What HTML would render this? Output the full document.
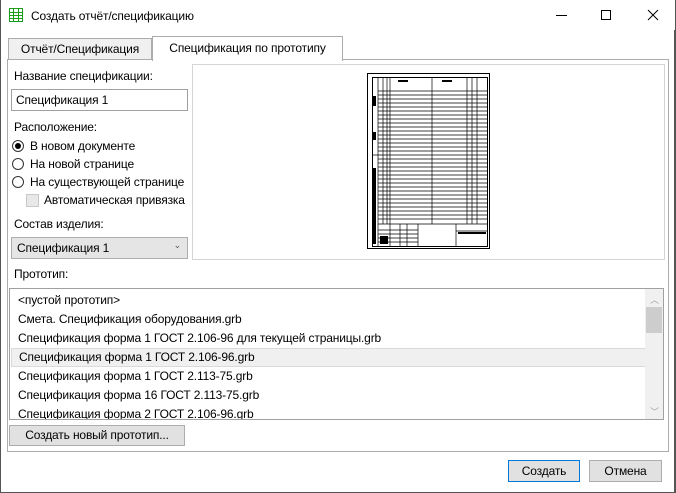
<!DOCTYPE html>
<html><head><meta charset="utf-8"><style>
*{box-sizing:border-box;margin:0;padding:0}
body{width:676px;height:493px;background:#fff;font-family:"Liberation Sans",sans-serif;font-size:12px;color:#000;position:relative;overflow:hidden;letter-spacing:-0.15px}
.a{position:absolute;white-space:nowrap}
.win{position:absolute;left:0;top:0;width:676px;height:493px;border:1px solid #555;border-top:none}
.pane{position:absolute;left:7px;top:59px;width:662px;height:393px;border:1px solid #acacac}
.tab{position:absolute;border:1px solid #acacac;border-bottom:none;text-align:center}
.inp{position:absolute;border:1px solid #a0a0a0;background:#fff;padding:3px 4px}
.btn{position:absolute;border:1px solid #adadad;background:#e1e1e1;text-align:center}
.radio{position:absolute;width:12px;height:12px;border:1px solid #333;border-radius:50%;background:#fff}
.list div{height:19px;line-height:19px;padding-left:8px}
</style></head><body>
<div class="win"></div>
<svg class="a" style="left:9px;top:8px" width="14" height="14"><rect x="0.5" y="0.5" width="13" height="13" fill="#fff" stroke="#1a9e1a"/><path d="M0 4.5H14M0 7.5H14M0 10.5H14M4.5 0V14M9.5 0V14" stroke="#1a9e1a"/></svg>
<div class="a" style="left:31px;top:9px">Создать отчёт/спецификацию</div>
<div class="a" style="left:556px;top:15px;width:11px;height:1px;background:#000"></div>
<div class="a" style="left:601px;top:10px;width:10px;height:10px;border:1px solid #000"></div>
<svg class="a" style="left:647px;top:9px" width="12" height="12"><path d="M1 1L11 11M11 1L1 11" stroke="#000"/></svg>
<div class="a" style="left:674px;top:30px;width:2px;height:463px;background:#555"></div>

<div class="pane"></div>
<div class="tab" style="left:8px;top:38px;width:144px;height:21px;background:#f0f0f0;line-height:20px">Отчёт/Спецификация</div>
<div class="tab" style="left:152px;top:36px;width:191px;height:25px;background:#fff;line-height:22px">Спецификация по прототипу</div>

<div class="a" style="left:14px;top:69px">Название спецификации:</div>
<div class="inp" style="left:11px;top:89px;width:177px;height:22px">Спецификация 1</div>
<div class="a" style="left:14px;top:120px">Расположение:</div>
<div class="radio" style="left:12px;top:140px"><div style="position:absolute;left:2px;top:2px;width:6px;height:6px;border-radius:50%;background:#000"></div></div>
<div class="a" style="left:30px;top:139px">В новом документе</div>
<div class="radio" style="left:12px;top:158px"></div>
<div class="a" style="left:30px;top:157px">На новой странице</div>
<div class="radio" style="left:12px;top:176px"></div>
<div class="a" style="left:30px;top:175px">На существующей странице</div>
<div class="a" style="left:26px;top:194px;width:13px;height:13px;border:1px solid #c8c8c8;background:#e8e8e8"></div>
<div class="a" style="left:44px;top:193px">Автоматическая привязка</div>
<div class="a" style="left:14px;top:217px">Состав изделия:</div>
<div class="btn" style="left:11px;top:237px;width:177px;height:22px;text-align:left;padding:3px 5px;background:#e5e5e5">Спецификация 1<span style="position:absolute;right:6px;top:2px;font-size:9px;color:#555">⌄</span></div>

<div class="a" style="left:192px;top:64px;width:473px;height:196px;border:1px solid #d4d4d4;background:#fff"></div>
<svg class="a" style="left:366px;top:72px" width="126" height="180" viewBox="366 72 126 180">
<rect x="367.5" y="73.5" width="122" height="175" fill="#fff" stroke="#000"/>
<rect x="372.5" y="77.5" width="115" height="169" fill="none" stroke="#000"/>
<g stroke="#000" stroke-width="0.7" fill="none">
<path d="M378 78V247M383 78V224M387 78V224M390 78V224M432 78V224M467 78V224M472 78V224M477 78V224"/>
<path d="M378 91H488M378 95H488M378 99H488M378 103H488M378 107H488M378 111H488M378 115H488M378 119H488M378 123H488M378 127H488M378 131H488M378 135H488M378 139H488M378 143H488M378 147H488M378 151H488M378 155H488M378 159H488M378 163H488M378 167H488M378 171H488M378 175H488M378 179H488M378 183H488M378 187H488M378 191H488M378 195H488M378 199H488M378 203H488M378 207H488M378 211H488M378 215H488M378 219H488"/>
<path d="M378 224H488M418 224V247M456 231H488M456 224V247M378 230H418M378 234H418M378 238H418M378 242H418M390 224V247M400 224V247M407 224V247M372 155H378"/>
</g>
<g fill="#000"><rect x="373" y="96" width="3" height="10"/><rect x="373" y="132" width="3" height="8"/><rect x="373" y="168" width="3" height="76"/><rect x="398" y="80" width="10" height="2"/><rect x="442" y="80" width="10" height="2"/><rect x="380" y="236" width="8" height="8"/><rect x="458" y="232" width="28" height="2"/></g>
</svg>

<div class="a" style="left:14px;top:267px">Прототип:</div>
<div class="a list" style="left:9px;top:288px;width:655px;height:132px;border:1px solid #a0a0a0;background:#fff;overflow:hidden;padding-top:2px">
<div>&lt;пустой прототип&gt;</div>
<div>Смета. Спецификация оборудования.grb</div>
<div>Спецификация форма 1 ГОСТ 2.106-96 для текущей страницы.grb</div>
<div style="background:#f0f0f0;border:1px solid #dadada;width:636px;margin-left:1px;padding-left:7px;line-height:17px">Спецификация форма 1 ГОСТ 2.106-96.grb</div>
<div>Спецификация форма 1 ГОСТ 2.113-75.grb</div>
<div>Спецификация форма 16 ГОСТ 2.113-75.grb</div>
<div>Спецификация форма 2 ГОСТ 2.106-96.grb</div>
</div>
<div class="a" style="left:645px;top:289px;width:18px;height:130px;background:#f0f0f0"></div>
<div class="a" style="left:646px;top:307px;width:16px;height:26px;background:#cdcdcd"></div>
<div class="a" style="left:650px;top:293px;font-size:9px;color:#a0a0a0">︿</div>
<div class="a" style="left:650px;top:405px;font-size:9px;color:#a0a0a0">﹀</div>
<div class="btn" style="left:9px;top:425px;width:176px;height:21px;line-height:19px">Создать новый прототип...</div>

<div class="btn" style="left:508px;top:460px;width:72px;height:22px;line-height:20px;border-color:#0078d7">Создать</div>
<div class="btn" style="left:589px;top:460px;width:73px;height:22px;line-height:20px">Отмена</div>
</body></html>
